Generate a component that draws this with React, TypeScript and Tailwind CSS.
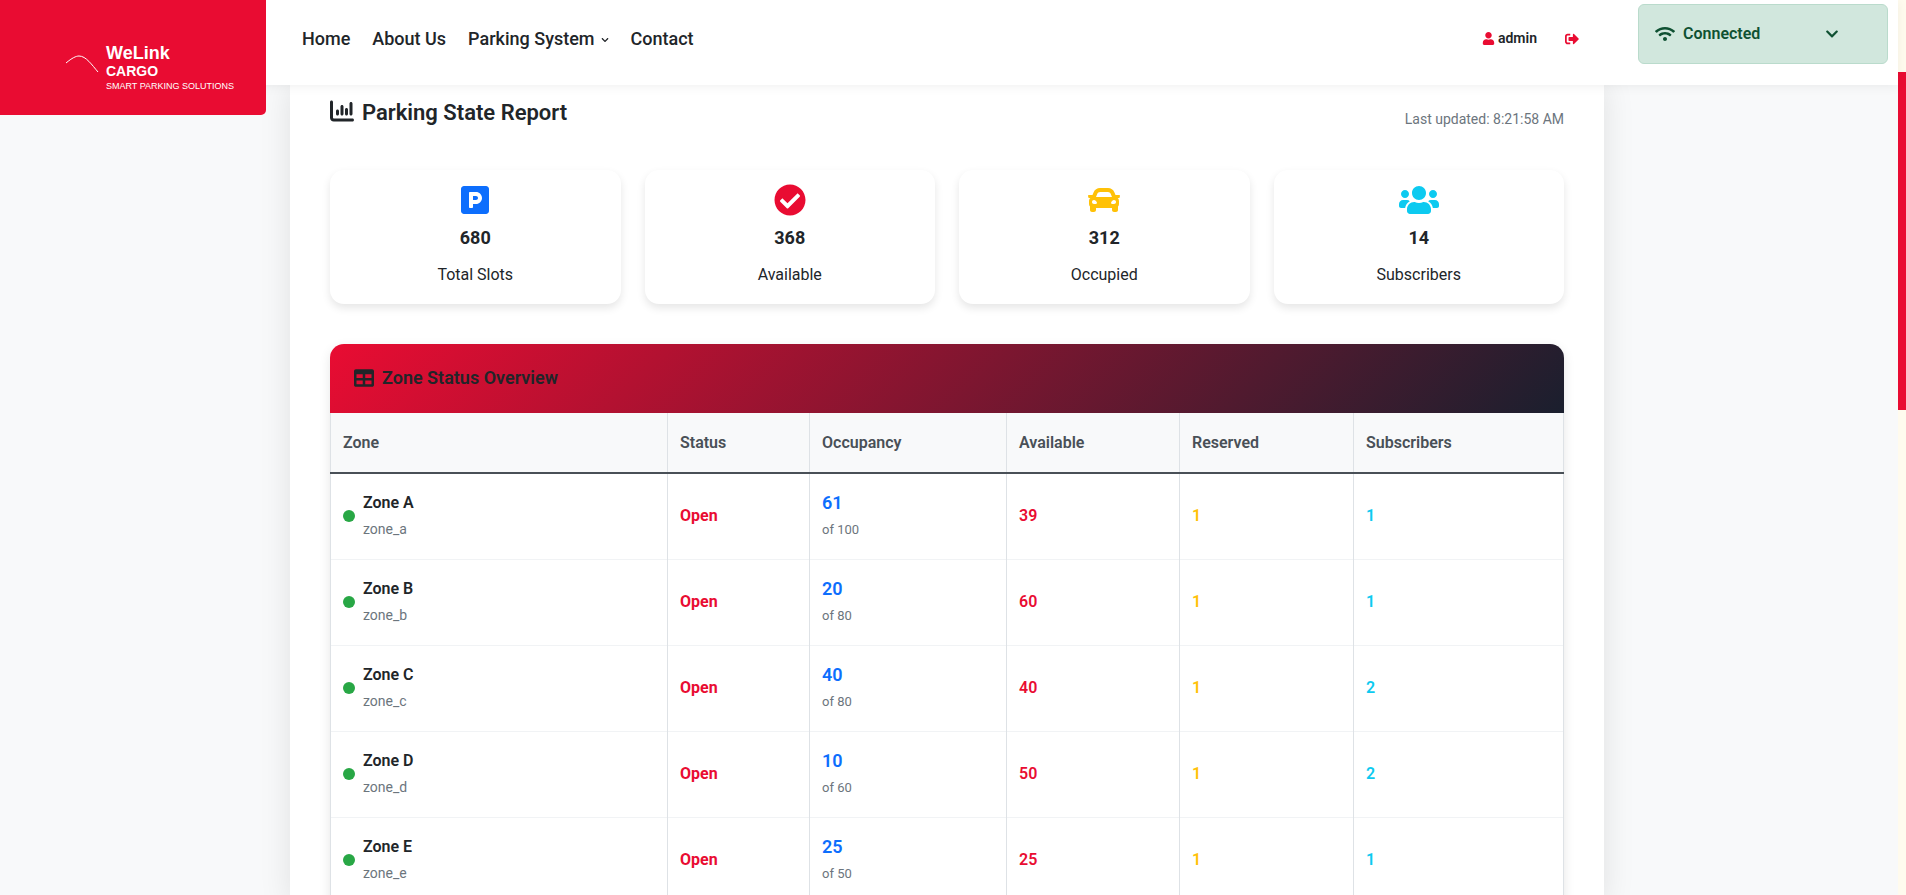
import React from 'react'
import {
  FaCar, FaCheckCircle, FaChevronDown, FaParking, FaSignOutAlt,
  FaTable, FaUser, FaUsers, FaWifi,
} from 'react-icons/fa'
import { FaChartColumn } from 'react-icons/fa6'

const NAV_LINKS = ['Home', 'About Us', 'Parking System', 'Contact']

const STATS = [
  { label: 'Total Slots', value: 680, icon: <FaParking size={32} className="text-[#0d6efd]" /> },
  { label: 'Available', value: 368, icon: <FaCheckCircle size={32} className="text-[#e90c32]" /> },
  { label: 'Occupied', value: 312, icon: <FaCar size={32} className="text-[#ffc107]" /> },
  { label: 'Subscribers', value: 14, icon: <FaUsers size={40} className="text-[#0dcaf0]" /> },
]

const ZONES = [
  { name: 'Zone A', code: 'zone_a', used: 61, total: 100, free: 39, reserved: 1, subs: 1 },
  { name: 'Zone B', code: 'zone_b', used: 20, total: 80, free: 60, reserved: 1, subs: 1 },
  { name: 'Zone C', code: 'zone_c', used: 40, total: 80, free: 40, reserved: 1, subs: 2 },
  { name: 'Zone D', code: 'zone_d', used: 10, total: 60, free: 50, reserved: 1, subs: 2 },
  { name: 'Zone E', code: 'zone_e', used: 25, total: 50, free: 25, reserved: 1, subs: 1 },
]

const HEADERS = ['Zone', 'Status', 'Occupancy', 'Available', 'Reserved', 'Subscribers']

function Logo() {
  return (
    <div className="absolute left-0 top-0 z-30 h-[115px] w-[266px] rounded-br-[5px] bg-[#e90c32] font-['Liberation_Sans',sans-serif] text-white">
      <svg className="absolute left-[60px] top-[50px]" width="44" height="28" viewBox="0 0 44 28" fill="none">
        <path d="M6 13 C12 8 16 6 19 6 C26 6 32 15 38 22" stroke="white" strokeWidth="1" />
      </svg>
      <div className="flex flex-col pl-[106px] pt-[43px]">
        <span className="text-[18px] font-bold leading-[20px]">WeLink</span>
        <span className="text-[14px] font-bold leading-[16px]">CARGO</span>
        <span className="whitespace-nowrap text-[9px] leading-[14px]">SMART PARKING SOLUTIONS</span>
      </div>
    </div>
  )
}

function Navbar() {
  return (
    <header className="relative z-20 flex h-[85px] shrink-0 items-start bg-white pl-[302px] pr-[10px] shadow-[0_2px_10px_rgba(0,0,0,0.06)]">
      <nav className="flex h-[77px] items-center gap-[22px] text-[18px] font-medium text-[#212529]">
        {NAV_LINKS.map((link) => (
          <a key={link} className="flex items-center gap-[6px]">
            {link}
            {link === 'Parking System' && <FaChevronDown size={8} className="mt-[3px]" />}
          </a>
        ))}
      </nav>
      <div className="ml-auto flex h-[77px] items-center text-[14px] font-semibold text-[#212529]">
        <FaUser size={13} className="mr-[3px] text-[#e90c32]" />
        <span>admin</span>
        <FaSignOutAlt size={14} className="ml-[28px] text-[#e90c32]" />
      </div>
      <div className="ml-[59px] mt-[4px] flex h-[60px] w-[250px] items-center rounded-[6px] border border-[#badbcc] bg-[#d1e7dd] pb-[1px] pl-[16px] text-[16px] font-semibold text-[#0f5132]">
        <FaWifi size={20} />
        <span className="ml-[8px]">Connected</span>
        <FaChevronDown size={14} className="ml-[65px]" />
      </div>
    </header>
  )
}

function StatCard({ label, value, icon }: { label: string; value: number; icon: React.ReactNode }) {
  return (
    <div className="flex h-[134px] flex-col items-center rounded-[14px] bg-white pt-[14px] shadow-[0_4px_8px_rgba(0,0,0,0.1)]">
      <div className="flex h-[32px] items-center justify-center">{icon}</div>
      <div className="mt-[9px] text-[18px] font-bold leading-[26px] text-[#212529]">{value}</div>
      <div className="mt-[12px] text-[16px] leading-[24px] text-[#212529]">{label}</div>
    </div>
  )
}

function ZoneTable() {
  return (
    <div className="mt-[40px] rounded-t-[14px] bg-white shadow-[0_4px_12px_rgba(0,0,0,0.1)]">
      <div className="flex h-[69px] items-center gap-[8px] rounded-t-[14px] bg-[linear-gradient(135deg,#e90c32,#1a1f2e)] pb-[2px] pl-[24px] text-[18px] font-semibold text-[#212529]">
        <FaTable size={20} />
        Zone Status Overview
      </div>
      <table className="w-full table-fixed border-collapse">
        <colgroup>
          <col className="w-[337px]" />
          <col className="w-[142px]" />
          <col className="w-[197px]" />
          <col className="w-[173px]" />
          <col className="w-[174px]" />
          <col />
        </colgroup>
        <thead>
          <tr className="h-[60px] border-b-2 border-b-[#495057] bg-[#f8f9fa] text-[16px] text-[#495057]">
            {HEADERS.map((h) => (
              <th key={h} className="border-x border-x-[#dee2e6] px-[12px] text-left font-semibold">{h}</th>
            ))}
          </tr>
        </thead>
        <tbody>
          {ZONES.map((z) => (
            <tr key={z.code} className="h-[86px] border-b border-b-[#f1f3f5] text-[16px] font-semibold">
              <td className="border-x border-x-[#dee2e6] px-[12px]">
                <div className="flex items-center gap-[8px]">
                  <span className="h-[12px] w-[12px] rounded-full bg-[#28a745]" />
                  <div className="pb-[1px]">
                    <div className="leading-[24px] text-[#212529]">{z.name}</div>
                    <div className="mt-[4px] text-[14px] font-normal leading-[21px] text-[#6c757d]">{z.code}</div>
                  </div>
                </div>
              </td>
              <td className="border-x border-x-[#dee2e6] px-[12px] font-bold text-[#e90c32]">Open</td>
              <td className="border-x border-x-[#dee2e6] px-[12px]">
                <div className="pb-[1px]">
                  <div className="text-[18px] leading-[24px] text-[#0d6efd]">{z.used}</div>
                  <div className="mt-[4px] text-[13px] font-normal leading-[21px] text-[#6c757d]">of {z.total}</div>
                </div>
              </td>
              <td className="border-x border-x-[#dee2e6] px-[12px] text-[#e90c32]">{z.free}</td>
              <td className="border-x border-x-[#dee2e6] px-[12px] text-[#ffc107]">{z.reserved}</td>
              <td className="border-x border-x-[#dee2e6] px-[12px] text-[#0dcaf0]">{z.subs}</td>
            </tr>
          ))}
        </tbody>
      </table>
    </div>
  )
}

export default function App() {
  return (
    <div className="flex h-[895px] overflow-hidden bg-[#f8f9fa] font-['Roboto',sans-serif]">
      <div className="relative flex min-w-0 flex-1 flex-col">
        <Logo />
        <Navbar />
        <main className="ml-[290px] w-[1314px] flex-1 bg-white px-[40px] shadow-[0_0_30px_rgba(0,0,0,0.1)]">
          <div className="flex h-[85px] justify-between">
            <h1 className="flex h-[54px] items-center gap-[8px] text-[22px] font-semibold text-[#212529]">
              <FaChartColumn size={24} className="-mt-[3px]" />
              Parking State Report
            </h1>
            <span className="mt-[20px] text-[14px] leading-[28px] text-[#6c757d]">Last updated: 8:21:58 AM</span>
          </div>
          <div className="grid grid-cols-4 gap-[24px]">
            {STATS.map((s) => <StatCard key={s.label} {...s} />)}
          </div>
          <ZoneTable />
        </main>
      </div>
      {/* page scrollbar */}
      <div className="w-[8px] shrink-0 bg-[#fffbee] pt-[72px]">
        <div className="h-[338px] bg-[#e90c32]" />
      </div>
    </div>
  )
}
